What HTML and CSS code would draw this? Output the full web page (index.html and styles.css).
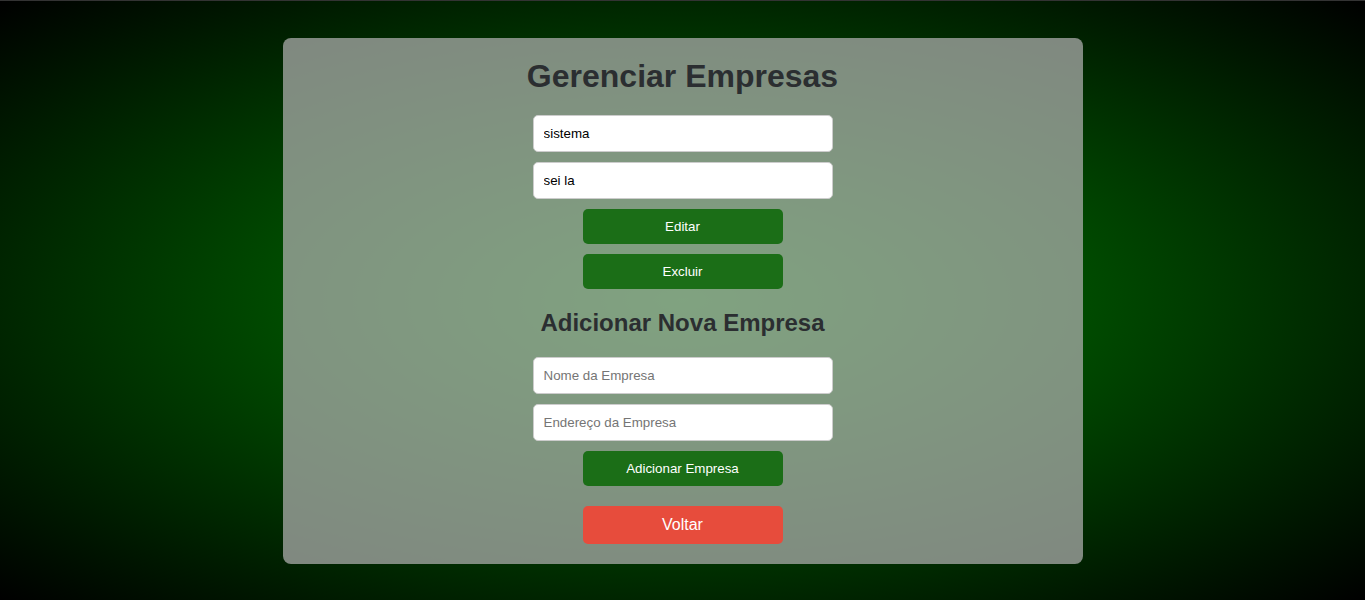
FILE: index.html
```html
<!DOCTYPE html>
<html lang="pt-BR">
<head>
<meta charset="utf-8">
<title>Gerenciar Empresas</title>
<link rel="stylesheet" href="styles.css">
</head>
<body>
<main class="panel">
  <h1 class="title">Gerenciar Empresas</h1>
  <div class="company">
    <input class="field" type="text" value="sistema">
    <input class="field" type="text" value="sei la">
    <button class="btn btn-green">Editar</button>
    <button class="btn btn-green">Excluir</button>
  </div>
  <h2 class="subtitle">Adicionar Nova Empresa</h2>
  <div class="company">
    <input class="field" type="text" placeholder="Nome da Empresa">
    <input class="field" type="text" placeholder="Endereço da Empresa">
    <button class="btn btn-green">Adicionar Empresa</button>
  </div>
  <button class="btn btn-red">Voltar</button>
</main>
</body>
</html>
```

FILE: styles.css
```css
* { box-sizing: border-box; }

html, body {
  margin: 0;
  height: 100%;
}

body {
  font-family: Arial, "Liberation Sans", sans-serif;
  background: radial-gradient(ellipse at center, #008000 0%, #000 100%);
  border-top: 1px solid #333;
  overflow: hidden;
}

.panel {
  width: 800px;
  margin: 37px auto 0;
  padding: 20px 0;
  background: rgba(175, 175, 175, 0.73);
  border-radius: 8px;
  display: flex;
  flex-direction: column;
  align-items: center;
}

.title {
  margin: 0 0 20px;
  font-size: 32px;
  font-weight: bold;
  color: #2b2e31;
}

.subtitle {
  margin: 20px 0 20px;
  font-size: 24px;
  font-weight: bold;
  color: #2b2e31;
}

.company {
  display: flex;
  flex-direction: column;
  align-items: center;
  gap: 10px;
}

.field {
  width: 300px;
  height: 37px;
  padding: 0 10px;
  border: 1px solid #ccc;
  border-radius: 5px;
  background: #fff;
  font-family: Arial, "Liberation Sans", sans-serif;
  font-size: 13.333px;
  color: #000;
  outline: none;
}

.field::placeholder {
  color: #757575;
}

.btn {
  width: 200px;
  height: 35px;
  border: none;
  border-radius: 5px;
  color: #fff;
  font-family: Arial, "Liberation Sans", sans-serif;
  font-size: 13.333px;
  cursor: pointer;
}

.btn-green {
  background: #1b6e17;
}

.btn-red {
  margin-top: 20px;
  height: 38px;
  background: #e74c3c;
  font-size: 16px;
}
```
